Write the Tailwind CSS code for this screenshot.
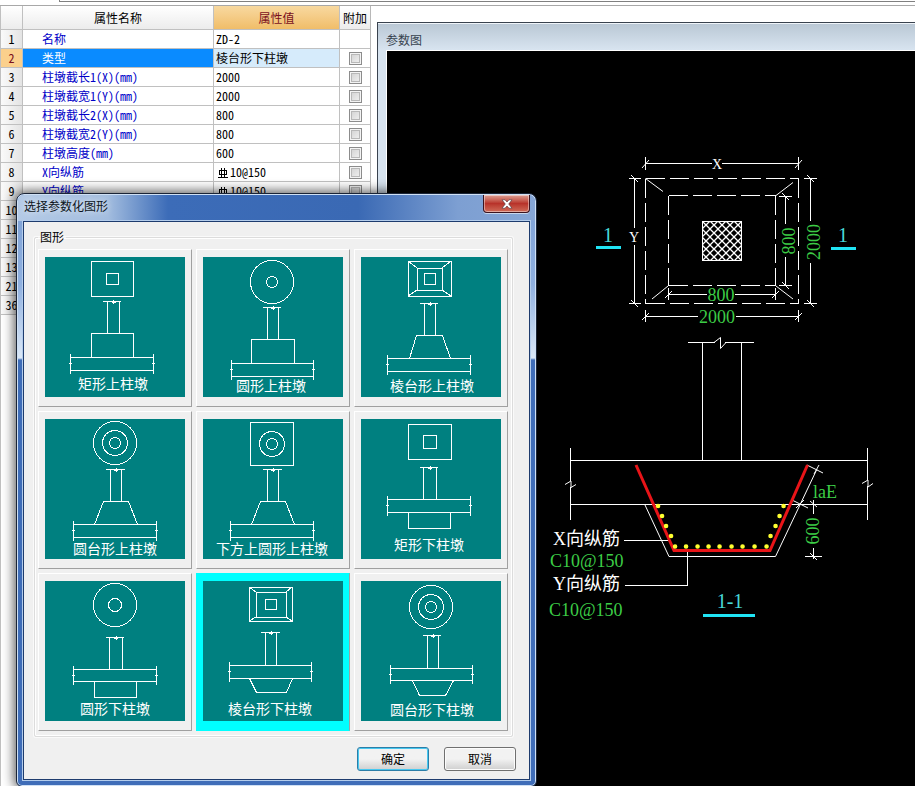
<!DOCTYPE html>
<html lang="zh-CN">
<head>
<meta charset="utf-8">
<title>柱墩属性</title>
<script src="https://cdn.jsdelivr.net/npm/@tailwindcss/browser@4"></script>
</head>
<body class="relative flex min-h-screen flex-col overflow-hidden bg-white font-['Noto_Sans_CJK_SC',sans-serif] text-xs leading-4 text-black">

<header class="h-[6px] shrink-0 border-b border-[#a8a8a8]">
  <div class="ml-[59px] h-[2px] border-b border-l border-[#808080]"></div>
</header>

<main class="flex flex-1 items-stretch">
  <section class="w-[371px] shrink-0 border-r border-l border-r-[#b8b8b8] border-l-[#c0c0c0]" aria-label="属性">
    <table class="w-full table-fixed border-separate border-spacing-0 [font-feature-settings:'hwid'] [&_td]:h-[19px] [&_td]:border-r [&_td]:border-b [&_td]:border-[#c0c0c0] [&_td]:p-0 [&_th]:border-r [&_th]:border-b [&_th]:border-[#c0c0c0] [&_th]:p-0 [&_th]:font-normal [&_tbody_th]:bg-linear-to-r [&_tbody_th]:from-[#fafafa] [&_tbody_th]:to-[#e4e4e4]">
      <colgroup><col class="w-[22px]"><col class="w-[191px]"><col class="w-[126px]"><col></colgroup>
      <thead>
        <tr class="h-6">
          <th class="bg-linear-to-b from-white to-[#ececec]"></th>
          <th class="bg-linear-to-b from-white to-[#ececec]">属性名称</th>
          <th class="bg-linear-to-b from-[#f8d9a0] to-[#f0bd68] text-[#7a1020]">属性值</th>
          <th class="border-r-0! bg-linear-to-b from-white to-[#ececec]">附加</th>
        </tr>
      </thead>
      <tbody id="rows"></tbody>
    </table>
  </section>

  <section class="mt-4 ml-[6px] flex min-w-0 flex-1 flex-col border-t border-l border-[#39424e] bg-[#d7e3ef]" aria-labelledby="pt">
    <h2 id="pt" class="h-[27px] shrink-0 border-t border-white/60 bg-linear-to-b from-[#bac8d5] to-[#d8e4f0] pt-2 pl-2 text-[#37434f]">参数图</h2>
    <div class="ml-2 flex-1 overflow-hidden border-t border-l border-white bg-black">
      <svg class="block h-[735px] w-[528px]" viewBox="387 51 528 735" fill="none" stroke="#fff" font-family="'Liberation Serif','Noto Sans CJK SC',serif" role="img" aria-label="棱台形下柱墩参数图">
        <defs>
          <pattern id="hatch" width="8" height="8" patternUnits="userSpaceOnUse" x="702" y="221"><path d="M0 0L8 8M8 0L0 8" stroke="#fff" stroke-width="1.300"/></pattern>
        </defs>
        <g shape-rendering="crispEdges">
          <path d="M645.5 178.5H798.5M645.5 303.5H798.5M645.5 178.5V303.5M798.5 178.5V303.5M668.5 195.5H775.5M668.5 285.5H775.5M668.5 195.5V285.5M775.5 195.5V285.5" stroke-dasharray="19 5"/>
          <rect x="702.5" y="221.5" width="39" height="39" fill="url(#hatch)"/>
          <path d="M645.5 163.5H712M722 163.5H798.5M645.5 157V170M798.5 157V170"/>
          <path d="M634.5 178.5V228M634.5 245V303.5M629 178.5H641M629 303.5H641"/>
          <path d="M785.5 196.5V224M785.5 257V285.5M779 196.5H792M779 285.5H792"/>
          <path d="M810.5 178.5V221M810.5 263V303.5M804 178.5H817M804 303.5H817"/>
          <path d="M668.5 294.5H707M735 294.5H775.5M668.5 288V300M775.5 288V300"/>
          <path d="M645.5 316.5H698M736 316.5H798.5M645.5 310V322M798.5 310V322"/>
          <path d="M688 342.5H715M725 342.5H754M702.5 342.5V460.5M741.5 342.5V460.5"/>
          <path d="M570.5 460.5H867.5M570.5 504.5H867.5M570.5 448V481M570.5 487V520M867.5 448V480M867.5 486V520"/>
          <path d="M624 540.5H671M625 585.5H687.5V549M813.5 500V514M813.5 548V559M805 556.5H822"/>
        </g>
        <path d="M645.5 178.5L663 191.5M793 182.5L776 195.5M668 286L652 299M776 286L793 299"/>
        <path d="M642 168L649 160M795 168L802 160M631 175L638 182M631 300L638 307M782 193L789 200M782 282L789 289M807 175L814 182M807 300L814 307M665 298L672 291M772 298L779 291M642 320L649 313M795 320L802 313M810 501L817 507M810 553L817 560"/>
        <path d="M714 342.5L720.5 337.5V348.5L726 342.5M565 484.5L571 481V487.5L576 484.5M862 483.5L868 480V487L873 483.5"/>
        <path d="M645 505L669 556.5H775.5L817 469M807 465L823 473M792 500L808 508M796 508L804 500M814 474L819 465"/>
        <path d="M636 465L674 550.5H770L807.5 465" stroke="#e81418" stroke-width="3"/>
        <path d="M658 506h.1M662 516h.1M666 526h.1M671 536h.1M675 546.5h.1M686 546.5h.1M697.5 546.5h.1M708.5 546.5h.1M719.5 546.5h.1M731.5 546.5h.1M742.5 546.5h.1M754.5 546.5h.1M766.5 546.5h.1M783.5 506h.1M779.5 516h.1M775.5 526h.1M770.5 536h.1" stroke="#ffff30" stroke-width="4.500" stroke-linecap="round"/>
        <path d="M596 247.5H621M831 248.5H856M703 615.5H755" stroke="#20e4f4" stroke-width="3"/>
        <g stroke="none" fill="#fff" font-size="14" text-anchor="middle">
          <text x="717" y="169">X</text><text x="634" y="242">Y</text>
        </g>
        <g stroke="none" fill="#3ccc46" font-size="18">
          <text x="721" y="301" text-anchor="middle">800</text>
          <text x="717" y="323" text-anchor="middle">2000</text>
          <text transform="translate(795 241) rotate(-90)" text-anchor="middle">800</text>
          <text transform="translate(820 242) rotate(-90)" text-anchor="middle">2000</text>
          <text transform="translate(819 531) rotate(-90)" text-anchor="middle">600</text>
          <text x="813" y="498">laE</text>
          <text x="550" y="567">C10@150</text>
          <text x="549" y="616">C10@150</text>
        </g>
        <g stroke="none" fill="#fff" font-size="18">
          <text x="553" y="545">X向纵筋</text><text x="553" y="590">Y向纵筋</text>
        </g>
        <g stroke="none" fill="#48d8d8" font-size="20" text-anchor="middle">
          <text x="608" y="242">1</text><text x="843" y="242">1</text><text x="730" y="608">1-1</text>
        </g>
      </svg>
    </div>
  </section>
</main>

<div role="dialog" aria-labelledby="dt" class="absolute top-[193px] left-4 flex w-[521px] flex-col rounded-t-lg rounded-b-md border border-[#1a2436] bg-[linear-gradient(to_bottom,#7c9fd4_0px,#8fb0e0_90px,#dbe8f7_164px,#3f6db8_166px)] px-[6px] pb-[6px] shadow-[0_0_12px_2px_rgba(0,0,0,0.65),inset_0_0_0_1px_#cfe0f4]">
  <div class="-mx-[5px] mt-px flex h-[26px] items-start justify-between rounded-t-md bg-[linear-gradient(to_right,#b4cae6_0px,#a3bddf_90px,#3c6cb8_150px,#3a69b4_340px,#7d9fd2_440px,#86a6d6_100%)] pr-[5px] pl-[6px]">
    <h1 id="dt" class="pt-[3px] text-[#0c1420] [text-shadow:0_0_6px_#fff8,0_0_10px_#fff8]">选择参数化图形</h1>
    <button type="button" aria-label="关闭" class="flex h-[18px] w-[47px] items-center justify-center rounded-b-[4px] border border-t-0 border-[#3b1420] bg-linear-to-b from-[#dd9e94] via-[#b8322a] via-50% to-[#cf6a58] shadow-[inset_0_0_0_1px_#ffffff70,0_1px_0_#ffffff90]">
      <svg class="h-[10px] w-3" viewBox="0 0 12 10"><path d="M1 .8H4L6 3 8 .8H11L7.7 5 11 9.200H8L6 7 4 9.200H1L4.300 5Z" fill="#fff" stroke="#4a3038" stroke-width=".6"/></svg>
    </button>
  </div>
  <div class="flex flex-col border border-[#1e3c6e] bg-[#f0f0f0] px-[10px] pt-[7px] pb-2 shadow-[0_0_0_1px_#b4cdec]">
    <fieldset class="mr-[6px] rounded-[2px] border border-[#dcdcdc] pt-1 pb-[5px] pl-[3px] shadow-[inset_0_0_0_1px_#fff,0_0_0_1px_#fafafa]">
      <legend class="px-0.5">图形</legend>
      <div id="shapes" class="grid grid-cols-[repeat(3,154px)] gap-1"></div>
    </fieldset>
    <div class="flex justify-end gap-[15px] pt-[10px] pr-[3px]">
      <button type="button" class="h-6 w-[72px] rounded-[3px] border border-[#2c7ea8] bg-linear-to-b from-[#f2f2f2] from-50% to-[#cfcfcf] shadow-[inset_0_0_0_1px_#48c8f0]">确定</button>
      <button type="button" class="h-6 w-[72px] rounded-[3px] border border-[#707070] bg-linear-to-b from-[#f2f2f2] from-50% to-[#cfcfcf] shadow-[inset_0_0_0_1px_#fcfcfc]">取消</button>
    </div>
  </div>
</div>

<script>
// Property rows: number, name, value, has checkbox
const rows = [
  [1, '名称', 'ZD-2', false], [2, '类型', '棱台形下柱墩', true],
  [3, '柱墩截长1(X)(mm)', '2000', true], [4, '柱墩截宽1(Y)(mm)', '2000', true],
  [5, '柱墩截长2(X)(mm)', '800', true], [6, '柱墩截宽2(Y)(mm)', '800', true],
  [7, '柱墩高度(mm)', '600', true], [8, 'X向纵筋', '#10@150', true], [9, 'Y向纵筋', '#10@150', true],
  [10, '', '', true], [11, '', '', true], [12, '', '', true], [13, '', '', true], [21, '', '', true], [36, '', '', true]
];
const rebar = '<svg class="mr-[2px] ml-[2px] inline-block h-[10px] w-[10px] align-[-1px]" viewBox="0 0 10 10" fill="none" stroke="#000" shape-rendering="crispEdges"><path d="M1.500 2.500H8.500V6.500H1.500ZM3.500 0V9M6.500 0V9M0 9.500H10"/></svg>';
document.getElementById('rows').innerHTML = rows.map(([n, name, value, check]) => {
  const on = n === 2;
  return `<tr>
    <th scope="row" class="${on ? 'bg-[#fbd08c] bg-none! text-[#7a1020]' : ''}">${n}</th>
    <td class="pl-[19px]! ${on ? 'bg-[#0a8bff] text-white' : 'text-[#0000c8]'}">${name}</td>
    <td class="pl-[2px]! ${on ? 'bg-[#d6ebfb]' : ''}">${value.replace('#', rebar)}</td>
    <td class="border-r-0! text-center">${check ? `<input type="checkbox" aria-label="附加 ${n}" class="mx-auto block size-[13px] appearance-none border border-[#8c8c8c] bg-linear-to-br from-[#cfcfcf] to-[#f4f4f4] shadow-[inset_0_0_0_1px_#f4f4f4,inset_0_0_0_2px_#b8b8b8]">` : ''}</td>
  </tr>`;
}).join('');

// Line work of each foundation shape on a 140 x 140 tile
const box = (a, b, c, d) => `M${a}.5 ${b}.5H${c}.5V${d}.5H${a}.5Z`;
const column = (l, r, a, b, top, bottom) =>
  `M${l} ${top}.5H${r}M${a}.5 ${top}.5V${bottom}.5M${b}.5 ${top}.5V${bottom}.5M${(a + b) / 2 + .5} ${top - 1}v4m-2 -2h4`;
const slab = (l, r, t, b) =>
  `M${l}.5 ${t}.5H${r}.5M${l}.5 ${b}.5H${r}.5M${l}.5 ${t - 3}V${b + 4}M${r}.5 ${t - 3}V${b + 4}M${l - 1} ${t + 6}.5h3M${r - 1} ${t + 6}.5h3`;
const ring = (x, y, r) => `M${x - r} ${y}a${r} ${r} 0 1 0 ${2 * r} 0a${r} ${r} 0 1 0 ${-2 * r} 0`;
const trap = (a, b, y1, c, d, y2) => `M${c}.5 ${y2}.5L${a}.5 ${y1}.5H${b}.5L${d}.5 ${y2}.5`;
const frustum = (a, b, c, d, e, f, g, h) =>
  box(a, b, c, d) + box(e, f, g, h) + `M${a} ${b}L${e} ${f}M${c} ${b}L${g} ${f}M${a} ${d}L${e} ${h}M${c} ${d}L${g} ${h}`;
const shapes = [
  ['矩形上柱墩', 33, 132, box(46,4,88,39) + box(61,16,73,27) + column(58,76,62,74,44,76) + box(46,76,88,100) + slab(25,108,100,113)],
  ['圆形上柱墩', 33, 134, ring(69,25,21.5) + ring(69,25,5.5) + column(60,78,64,75,50,82) + box(48,82,91,106) + slab(28,110,106,119)],
  ['棱台形上柱墩', 29, 134, frustum(47,4,90,39,56,11,81,33) + box(63,16,74,27) + column(59,77,63,74,46,78) + trap(55,81,78,48,89,101) + slab(26,109,101,114)],
  ['圆台形上柱墩', 28, 135, ring(70,24,21.5) + ring(70,24,12.5) + ring(70,24,5.5) + column(61,80,65,76,50,82) + trap(58,83,82,49,92,105) + slab(28,111,105,118)],
  ['下方上圆形上柱墩', 13, 135, box(47,3,90,46) + ring(69,25,12.5) + ring(69,25,5.5) + column(60,79,64,75,50,82) + trap(57,82,82,48,91,105) + slab(27,110,105,118)],
  ['矩形下柱墩', 33, 131, box(47,5,90,40) + box(62,16,75,29) + column(59,77,62,75,48,80) + slab(26,109,80,93) + box(47,93,89,109)],
  ['圆形下柱墩', 35, 133, ring(70,24,21.5) + ring(70,24,6.5) + column(61,79,64,77,56,88) + slab(28,111,88,100) + box(49,100,91,116)],
  ['棱台形下柱墩', 25, 133, frustum(46,6,89,40,53,11,83,36) + box(62,18,73,28) + column(58,77,62,73,51,84) + slab(26,108,84,97) + trap(53,83,111,46,89,97)],
  ['圆台形下柱墩', 29, 134, ring(70,26,21.5) + ring(70,26,12.5) + ring(70,26,5.5) + column(62,80,66,77,54,87) + slab(29,111,87,99) + trap(58,84,114,51,92,99)]
];
document.getElementById('shapes').innerHTML = shapes.map(([name, x, y, d], i) => `
  <button type="button" aria-pressed="${i === 7}" class="flex h-[158px] items-start border-t border-r border-b border-l pt-[7px] pl-[6px] ${i === 7 ? 'border-[#00ffff] border-r-[#a0a0a0] bg-[#00ffff]' : 'border-t-white border-r-[#a0a0a0] border-b-[#a0a0a0] border-l-white bg-[#f0f0f0]'}">
    <svg class="block size-[140px] bg-[#008080]" viewBox="0 0 140 140" fill="none" stroke="#fff">
      <path d="${d}" shape-rendering="crispEdges"/>
      <text x="${x}" y="${y}" fill="#fff" stroke="none" font-size="14">${name}</text>
    </svg>
  </button>`).join('');
</script>
</body>
</html>
